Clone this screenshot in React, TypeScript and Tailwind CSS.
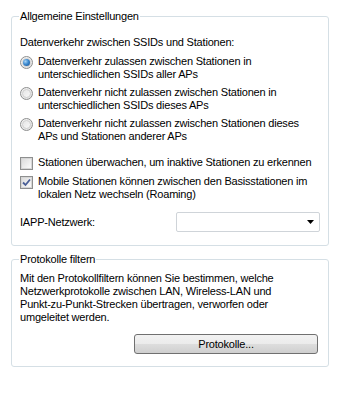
import React from 'react';

const font = { fontFamily: '"Liberation Sans", Arial, sans-serif' };

function Radio({ checked }: { checked?: boolean }) {
  return (
    <span className="relative mt-px flex h-[13px] w-[13px] shrink-0 items-center justify-center rounded-full border border-[#8e8f8f] bg-gradient-to-br from-[#f4f4f4] to-[#e0e0e0]">
      <span className="h-[9px] w-[9px] rounded-full border border-[#d0d0d0] bg-gradient-to-br from-[#e6e6e6] to-[#f8f8f8]" />
      {checked && (
        <span className="absolute h-[7px] w-[7px] rounded-full bg-[radial-gradient(circle_at_35%_35%,#a8d4f6_0%,#3c8ad0_45%,#164a87_100%)]" />
      )}
    </span>
  );
}

function Check({ checked }: { checked?: boolean }) {
  return (
    <span className="mt-px flex h-[13px] w-[13px] shrink-0 items-center justify-center border border-[#8e8f8f] bg-white">
      <span className="flex h-[11px] w-[11px] items-center justify-center border border-[#d6d6d6] bg-gradient-to-br from-[#dcdcdc] to-[#fbfbfb]">
        {checked && (
          <svg width="9" height="9" viewBox="0 0 9 9">
            <path d="M1 4.5 L3.5 7 L8 1.5" fill="none" stroke="#4a5f97" strokeWidth="1.8" />
          </svg>
        )}
      </span>
    </span>
  );
}

function Option({ children, checked, kind }: { children: React.ReactNode; checked?: boolean; kind: 'radio' | 'check' }) {
  return (
    <div className="flex items-start gap-[5px]">
      {kind === 'radio' ? <Radio checked={checked} /> : <Check checked={checked} />}
      <span className="whitespace-nowrap leading-[13px]">{children}</span>
    </div>
  );
}

export default function App() {
  return (
    <div className="min-h-[397px] bg-white pt-[10px] pl-[11px] pr-[11px] text-[11px] tracking-[-0.2px] text-black" style={font}>
      <fieldset className="rounded-[3px] border border-[#d5dfe5] pl-[8px] pr-[8px] pb-[13px]">
        <legend className="ml-[-1px] px-[1px] leading-[13px]">Allgemeine Einstellungen</legend>
        <div className="mt-[13px] leading-[13px]">Datenverkehr zwischen SSIDs und Stationen:</div>
        <div className="mt-[6px] flex flex-col gap-[5px]">
          <Option kind="radio" checked>
            Datenverkehr zulassen zwischen Stationen in<br />unterschiedlichen SSIDs aller APs
          </Option>
          <Option kind="radio">
            Datenverkehr nicht zulassen zwischen Stationen in<br />unterschiedlichen SSIDs dieses APs
          </Option>
          <Option kind="radio">
            Datenverkehr nicht zulassen zwischen Stationen dieses<br />APs und Stationen anderer APs
          </Option>
        </div>
        <div className="mt-[13px] flex flex-col gap-[5px]">
          <Option kind="check">Stationen überwachen, um inaktive Stationen zu erkennen</Option>
          <Option kind="check" checked>
            Mobile Stationen können zwischen den Basisstationen im<br />lokalen Netz wechseln (Roaming)
          </Option>
        </div>
        <div className="mt-[11px] flex items-center justify-between">
          <span className="leading-[13px]">IAPP-Netzwerk:</span>
          <div className="flex h-[20px] w-[144px] items-center justify-end rounded-[2px] border border-[#cfd4d9] bg-white pr-[5px]">
            <svg width="7" height="4" viewBox="0 0 7 4">
              <path d="M0 0 H7 L3.5 4 Z" fill="#000" />
            </svg>
          </div>
        </div>
      </fieldset>

      <fieldset className="mt-[7px] rounded-[3px] border border-[#d5dfe5] pl-[8px] pr-[10px] pb-[12px]">
        <legend className="ml-[-1px] px-[1px] leading-[13px]">Protokolle filtern</legend>
        <p className="mt-[6px] leading-[13px]">
          Mit den Protokollfiltern können Sie bestimmen, welche<br />
          Netzwerkprotokolle zwischen LAN, Wireless-LAN und<br />
          Punkt-zu-Punkt-Strecken übertragen, verworfen oder<br />
          umgeleitet werden.
        </p>
        <div className="mt-[10px] flex justify-end">
          <button className="h-[20px] w-[184px] rounded-[3px] border border-[#707070] bg-[linear-gradient(#f2f2f2_0%,#ebebeb_50%,#dddddd_51%,#cfcfcf_100%)] leading-[13px] text-black">
            Protokolle...
          </button>
        </div>
      </fieldset>
    </div>
  );
}
